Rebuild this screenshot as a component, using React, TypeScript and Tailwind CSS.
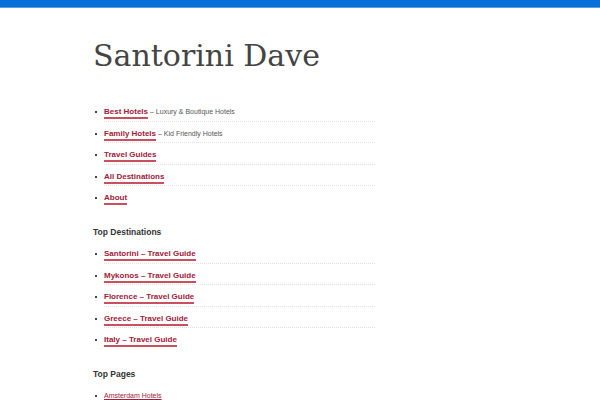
import React from "react";

const mainLinks = [
    {label: "Best Hotels", note: "– Luxury & Boutique Hotels"},
    {label: "Family Hotels", note: "– Kid Friendly Hotels"},
    {label: "Travel Guides"},
    {label: "All Destinations"},
    {label: "About"},
];

const destinations = [
    "Santorini – Travel Guide",
    "Mykonos – Travel Guide",
    "Florence – Travel Guide",
    "Greece – Travel Guide",
    "Italy – Travel Guide",
];

const NavItem = ({label, note, last}: { label: string; note?: string; last?: boolean }) => (
    <li className={`relative flex items-center pt-[7px] pb-[1.6px] ${last ? "" : "border-b border-dotted border-[#e2e2e2]"}`}>
        <span className="absolute -left-[9px] top-[11px] w-[2px] h-[2px] bg-[#444]"/>
        <a href="#" className="block leading-[10px] text-[8px] font-bold text-[#a0203a] border-b-2 border-[#c8505f]">
            {label}
        </a>
        {note && <span className="ml-[2px] text-[7px] leading-[10px] text-[#555] mb-[2px]">{note}</span>}
    </li>
);

export default function App() {
    return (
        <div className="min-h-[400px] bg-white font-['Liberation_Sans',Arial,sans-serif]">
            <div className="h-[8px] bg-[#0670d8] border-b border-[#5aa0e8]"/>
            <div className="pl-[93px]">
                <h1 className="mt-[28px] text-[30px] leading-[40px] font-['DejaVu_Serif',serif] text-[#444]">
                    Santorini Dave
                </h1>
                <ul className="mt-[24px] ml-[11px] w-[271px]">
                    {mainLinks.map((l, i) => (
                        <NavItem key={l.label} label={l.label} note={l.note} last={i === mainLinks.length - 1}/>
                    ))}
                </ul>

                <h2 className="mt-[19px] text-[8.5px] leading-[12px] font-bold text-[#333]">Top Destinations</h2>
                <ul className="mt-[4px] ml-[11px] w-[271px]">
                    {destinations.map((d, i) => (
                        <NavItem key={d} label={d} last={i === destinations.length - 1}/>
                    ))}
                </ul>

                <h2 className="mt-[19px] text-[8.5px] leading-[12px] font-bold text-[#333]">Top Pages</h2>
                <ul className="mt-[4px] ml-[11px] w-[271px]">
                    <li className="relative flex items-center pt-[7px]">
                        <span className="absolute -left-[9px] top-[11px] w-[2px] h-[2px] bg-[#444]"/>
                        <a href="#" className="leading-[10px] text-[7px] text-[#a0203a] underline">
                            Amsterdam Hotels
                        </a>
                    </li>
                </ul>
            </div>
        </div>
    );
}
